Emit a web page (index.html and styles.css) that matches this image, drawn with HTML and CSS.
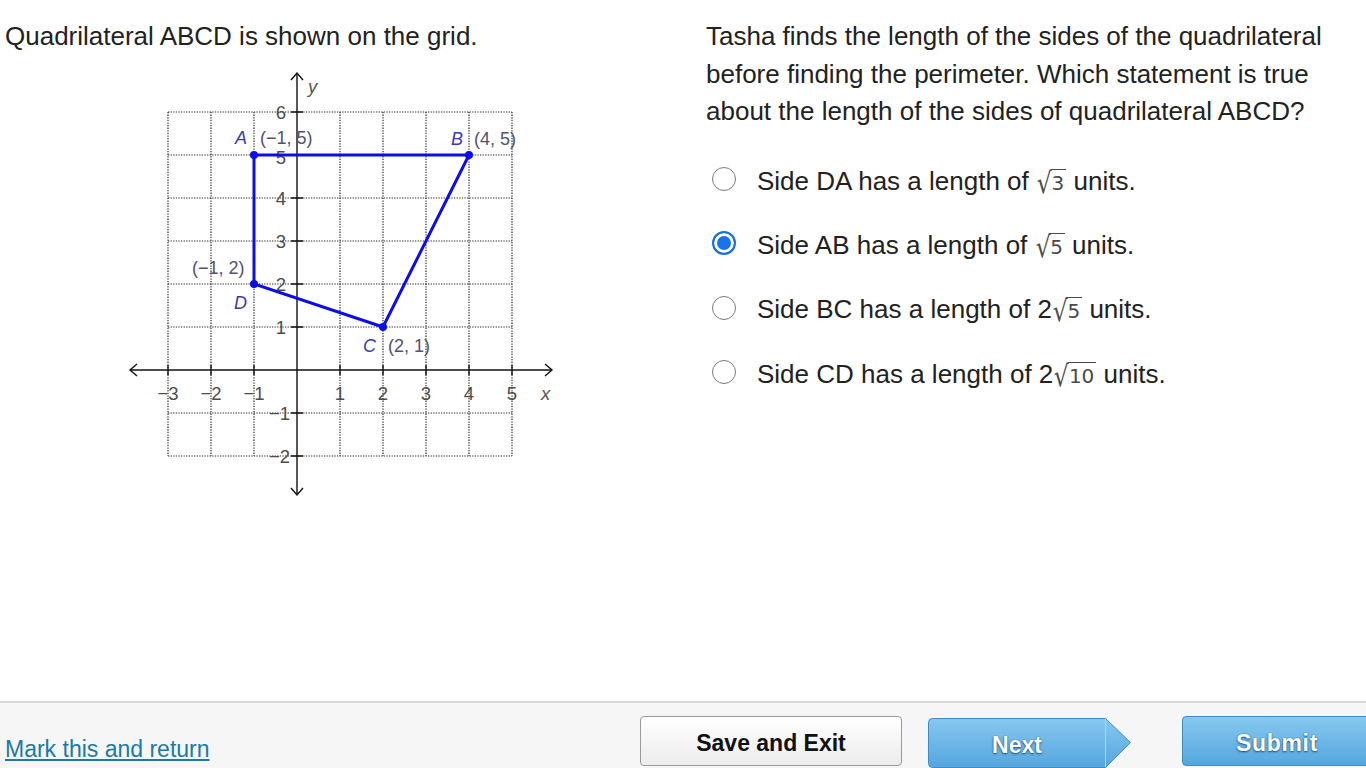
FILE: index.html
```html
<!DOCTYPE html>
<html>
<head>
<meta charset="utf-8">
<link rel="stylesheet" href="styles.css">
</head>
<body>
<div class="page">
  <main class="content">
    <section class="left">
      <p class="prompt">Quadrilateral ABCD is shown on the grid.</p>
      <svg class="graph" width="440" height="430" viewBox="0 0 440 430">
        <g class="grid">
          <line x1="48" y1="42" x2="48" y2="386"/>
          <line x1="91" y1="42" x2="91" y2="386"/>
          <line x1="134" y1="42" x2="134" y2="386"/>
          <line x1="220" y1="42" x2="220" y2="386"/>
          <line x1="263" y1="42" x2="263" y2="386"/>
          <line x1="306" y1="42" x2="306" y2="386"/>
          <line x1="349" y1="42" x2="349" y2="386"/>
          <line x1="392" y1="42" x2="392" y2="386"/>
          <line x1="48" y1="42" x2="392" y2="42"/>
          <line x1="48" y1="85" x2="392" y2="85"/>
          <line x1="48" y1="128" x2="392" y2="128"/>
          <line x1="48" y1="171" x2="392" y2="171"/>
          <line x1="48" y1="214" x2="392" y2="214"/>
          <line x1="48" y1="257" x2="392" y2="257"/>
          <line x1="48" y1="343" x2="392" y2="343"/>
          <line x1="48" y1="386" x2="392" y2="386"/>
        </g>
        <g class="axis">
          <line x1="10" y1="300" x2="432" y2="300"/>
          <line x1="177" y1="3" x2="177" y2="425"/>
          <polyline points="17,294 10,300 17,306"/>
          <polyline points="425,294 432,300 425,306"/>
          <polyline points="171,10 177,3 183,10"/>
          <polyline points="171,418 177,425 183,418"/>
          <path d="M48 295V305M91 295V305M134 295V305M220 295V305M263 295V305M306 295V305M349 295V305M392 295V305"/>
          <path d="M171 42H183M171 85H183M171 128H183M171 171H183M171 214H183M171 257H183M171 343H183M171 386H183"/>
        </g>
        <g class="nums xnums">
          <text x="48" y="330">−3</text>
          <text x="91" y="330">−2</text>
          <text x="134" y="330">−1</text>
          <text x="220" y="330">1</text>
          <text x="263" y="330">2</text>
          <text x="306" y="330">3</text>
          <text x="349" y="330">4</text>
          <text x="392" y="330">5</text>
        </g>
        <g class="nums ynums">
          <text x="166" y="49">6</text>
          <text x="166" y="94">5</text>
          <text x="166" y="135">4</text>
          <text x="166" y="178">3</text>
          <text x="166" y="221">2</text>
          <text x="166" y="264">1</text>
          <text x="170" y="350">−1</text>
          <text x="170" y="393">−2</text>
        </g>
        <text class="axlab" x="421" y="330">x</text>
        <text class="axlab" x="188" y="23">y</text>
        <polygon class="quad" points="134,85 349,85 263,257 134,214"/>
        <g class="pts">
          <circle cx="134" cy="85" r="4"/>
          <circle cx="349" cy="85" r="4"/>
          <circle cx="263" cy="257" r="4"/>
          <circle cx="134" cy="214" r="4"/>
        </g>
        <g class="plab">
          <text class="vname" x="115" y="74">A</text>
          <text class="coord" x="140" y="74">(−1, 5)</text>
          <text class="vname" x="331" y="75">B</text>
          <text class="coord" x="354" y="75">(4, 5)</text>
          <text class="coord" x="72" y="204">(−1, 2)</text>
          <text class="vname" x="114" y="239">D</text>
          <text class="vname" x="243" y="282">C</text>
          <text class="coord" x="268" y="282">(2, 1)</text>
        </g>
      </svg>
    </section>
    <section class="right">
      <p class="question">Tasha finds the length of the sides of the quadrilateral before finding the perimeter. Which statement is true about the length of the sides of quadrilateral ABCD?</p>
      <ul class="options">
        <li class="option"><span class="radio"></span><span class="otext">Side DA has a length of <span class="math"><span class="rad">√</span><span class="rc">3</span></span> units.</span></li>
        <li class="option"><span class="radio checked"></span><span class="otext">Side AB has a length of <span class="math"><span class="rad">√</span><span class="rc">5</span></span> units.</span></li>
        <li class="option"><span class="radio"></span><span class="otext">Side BC has a length of 2<span class="math"><span class="rad">√</span><span class="rc">5</span></span> units.</span></li>
        <li class="option"><span class="radio"></span><span class="otext">Side CD has a length of 2<span class="math"><span class="rad">√</span><span class="rc">10</span></span> units.</span></li>
      </ul>
    </section>
  </main>
  <footer class="bar">
    <a class="mark" href="#">Mark this and return</a>
    <div class="actions">
      <button class="btn save">Save and Exit</button>
      <button class="btn next">
        <svg class="next-shape" width="204" height="50" viewBox="0 0 204 50">
          <defs>
            <linearGradient id="ng" x1="0" y1="0" x2="0" y2="1">
              <stop offset="0" stop-color="#86c8f0"/>
              <stop offset="1" stop-color="#55a6de"/>
            </linearGradient>
          </defs>
          <path d="M4.5 0.5H177.5L202.5 24.5L177.5 49.5H4.5Q0.5 49.5 0.5 45.5V4.5Q0.5 0.5 4.5 0.5Z" fill="url(#ng)" stroke="#3f8bc6"/>
          <line x1="177.5" y1="1" x2="177.5" y2="49" stroke="#a9d6f3" stroke-width="1"/>
        </svg>
        <span class="next-label">Next</span>
      </button>
      <button class="btn submit">Submit</button>
    </div>
  </footer>
</div>
</body>
</html>
```
FILE: styles.css
```css
* { box-sizing: border-box; }
html, body { margin: 0; padding: 0; background: #fff; }
body { font-family: "Liberation Sans", Arial, sans-serif; color: #222; }
.page { width: 1366px; height: 768px; display: flex; flex-direction: column; overflow: hidden; }
.content { flex: 1; display: grid; grid-template-columns: 706px 1fr; }
.left { padding-left: 5px; }
.prompt { margin: 21px 0 0; font-size: 26px; line-height: 30px; }
.graph { display: block; margin: 19px 0 0 115px; }
.grid line { stroke: #2a2a2a; stroke-width: 1.2; stroke-dasharray: 1.3 1.3; }
.axis line, .axis polyline, .axis path { stroke: #111; stroke-width: 1.4; fill: none; }
.nums text { font-family: "Liberation Sans", Arial, sans-serif; font-size: 18.5px; fill: #4d4d4d; }
.xnums text { text-anchor: middle; }
.ynums text { text-anchor: end; }
.axlab { font-family: "Liberation Sans", Arial, sans-serif; font-style: italic; font-size: 18.5px; fill: #555; }
.quad { fill: none; stroke: #0d0de6; stroke-width: 3; stroke-linejoin: round; }
.pts circle { fill: #0d0de6; }
.plab text { font-family: "Liberation Sans", Arial, sans-serif; font-size: 18px; }
.vname { font-style: italic; fill: #3c3ca8; }
.coord { fill: #52526e; }
.right { padding-right: 20px; }
.question { margin: 18px 0 0; font-size: 26px; line-height: 37.5px; }
.options { list-style: none; margin: 18px 0 0; padding: 0 0 0 6px; }
.option { display: flex; align-items: center; height: 64.3px; }
.radio { width: 24px; height: 24px; border-radius: 50%; border: 1.5px solid #7a7a7a; background: #fff; flex: none; margin-right: 21px; margin-top: -3px; }
.radio.checked { border: 2px solid #1a6fe0; background: #1a73e8; box-shadow: inset 0 0 0 3px #fff; }
.otext { font-size: 26px; line-height: 30px; white-space: nowrap; }
.math { display: inline-flex; align-items: baseline; color: #4a4a4a; font-family: "DejaVu Sans", sans-serif; }
.rad { display: inline-block; font-size: 26px; line-height: 26px; transform: scale(0.9, 1.12); transform-origin: 50% 75%; position: relative; top: 3px; }
.rc { font-size: 20px; line-height: 20px; padding: 3px 2px 0 1px; margin-left: -2px; border-top: 1.5px solid #4a4a4a; }
.bar { height: 67px; flex: none; background: #f6f6f6; border-top: 2px solid #d8d8d8; display: flex; align-items: flex-end; justify-content: space-between; padding-left: 5px; }
.mark { font-size: 23px; color: #1c79a8; text-decoration: underline; margin-bottom: 5px; }
.actions { display: flex; align-items: flex-end; }
.btn { font-family: "Liberation Sans", Arial, sans-serif; font-weight: bold; font-size: 23px; cursor: pointer; }
.save { width: 262px; height: 50px; margin-bottom: 2px; padding-top: 5px; border: 1px solid #9a9a9a; border-radius: 4px; background: linear-gradient(#ffffff, #ececec); color: #111; }
.next { position: relative; width: 204px; height: 50px; margin: 0 0 0 26px; padding: 4px 0 0; border: none; background: transparent; color: #fff; }
.next-shape { position: absolute; left: 0; top: 0; }
.next-label { position: relative; display: block; width: 178px; text-align: center; text-shadow: 0 1px 2px #1d4f78, 0 0 1px #1d4f78; }
.submit { width: 190px; height: 50px; margin: 0 -6px 2px 50px; padding-top: 5px; border: 1px solid #3f8bc6; border-radius: 4px; background: linear-gradient(#86c8f0, #55a6de); color: #fff; text-shadow: 0 1px 2px #1d4f78, 0 0 1px #1d4f78; letter-spacing: 0.7px; }
```
